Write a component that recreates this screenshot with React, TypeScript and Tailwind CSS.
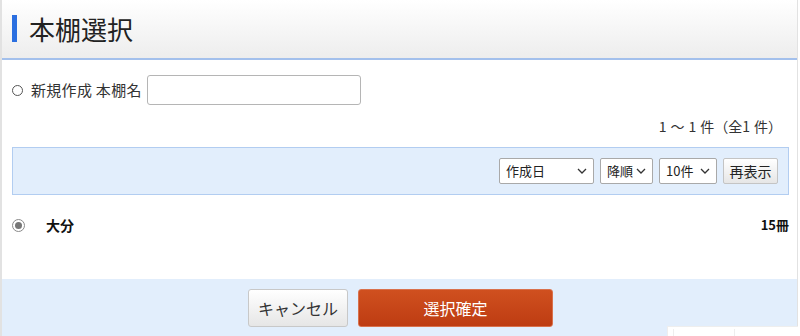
import React from "react";

function Chevron() {
  return (
    <svg width="10" height="6" viewBox="0 0 10 6" className="shrink-0">
      <path d="M1 1 L5 5 L9 1" fill="none" stroke="#333" strokeWidth="1.3" />
    </svg>
  );
}

function FakeSelect({ label, width }: { label: string; width: string }) {
  return (
    <div
      className={`${width} h-[26px] bg-white border border-[#a9a9a9] rounded-[2px] flex items-center justify-between pl-[6px] pr-[6px] text-[13px] text-[#222]`}
    >
      <span>{label}</span>
      <Chevron />
    </div>
  );
}

export default function App() {
  return (
    <div
      className="relative w-[800px] h-[336px] overflow-hidden bg-white"
      style={{ fontFamily: '"Noto Sans CJK JP", "Noto Sans", sans-serif' }}
    >
      <div className="w-[798px] h-[336px] border-l-2 border-r border-[#e2e2e2] flex flex-col">
        {/* Header */}
        <div className="h-[60px] shrink-0 border-b-2 border-[#a3c0ec] bg-gradient-to-b from-white to-[#ededed] flex items-center pl-[10px]">
          <div className="w-[5px] h-[27px] bg-[#2b6fe0] mt-[-2px]" />
          <h1 className="ml-[12px] text-[26px] leading-none text-[#222] mt-[-1px]">本棚選択</h1>
        </div>

        {/* New shelf row */}
        <div className="flex items-center pl-[10px] pt-[15px] text-[15px] text-[#333]">
          <div className="w-[11px] h-[11px] rounded-full border border-[#555] bg-white" />
          <span className="ml-[8px] tracking-[0.3px]">新規作成 本棚名</span>
          <div className="ml-[5px] w-[214px] h-[30px] border border-[#b5b5b5] rounded-[3px] bg-white" />
        </div>

        {/* Count */}
        <div className="flex justify-end items-center pr-[22px] mt-[11px] text-[14px] leading-[20px] text-[#333]">
          <span>1</span>
          <span className="ml-[4px]">～</span>
          <span className="ml-[4px]">1</span>
          <span className="ml-[4px]">件（全1</span>
          <span className="ml-[4px]">件</span>
          <span className="-mr-[7px]">）</span>
        </div>

        {/* Filter box */}
        <div className="mt-[11px] ml-[10px] w-[777px] h-[48px] bg-[#e2eefc] border border-[#b2cdf1] flex items-center justify-end pr-[10px] gap-[6px]">
          <FakeSelect label="作成日" width="w-[95px]" />
          <FakeSelect label="降順" width="w-[53px]" />
          <FakeSelect label="10件" width="w-[58px]" />
          <div className="w-[55px] h-[26px] border border-[#c4c4c4] rounded-[2px] bg-gradient-to-b from-white to-[#e6e6e6] flex items-center justify-center text-[14px] text-[#222]">
            再表示
          </div>
        </div>

        {/* Shelf row */}
        <div className="flex items-center pl-[10px] pr-[8px] mt-[22px] h-[16px]">
          <div className="w-[13px] h-[13px] rounded-full border border-[#8a8a8a] bg-white flex items-center justify-center">
            <div className="w-[7px] h-[7px] rounded-full bg-[#777]" />
          </div>
          <span className="ml-[21px] text-[14px] font-bold text-[#111]">大分</span>
          <span className="ml-auto text-[13px] font-bold text-[#111]">15冊</span>
        </div>

        {/* Bottom bar */}
        <div className="mt-auto h-[57px] bg-[#e2eefc] flex justify-center items-start pt-[10px] gap-[10px] pl-[2px]">
          <div className="w-[100px] h-[38px] border border-[#c8c8c8] rounded-[3px] bg-gradient-to-b from-white to-[#e6e6e6] flex items-center justify-center text-[16px] text-[#333]">
            キャンセル
          </div>
          <div className="w-[195px] h-[38px] border border-[#d9714c] rounded-[3px] bg-gradient-to-b from-[#d0501f] to-[#be3c12] flex items-center justify-center text-[16px] text-white">
            選択確定
          </div>
        </div>
      </div>

      {/* partially visible popup at bottom right */}
      <div className="absolute left-[667px] top-[326px] w-[131px] h-[20px] bg-white border-l border-t border-[#eeeeee]">
        <div className="ml-[5px] mt-[2px] w-[62px] h-[16px] border-l border-r border-[#eeeeee]" />
      </div>
    </div>
  );
}
